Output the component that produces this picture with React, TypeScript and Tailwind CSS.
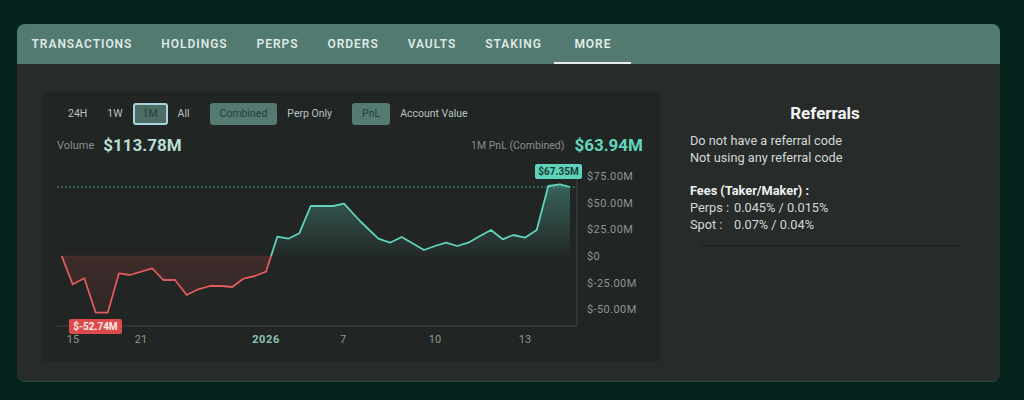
import React from 'react';

const tabs = ['TRANSACTIONS', 'HOLDINGS', 'PERPS', 'ORDERS', 'VAULTS', 'STAKING'];

const pts: [number, number][] = [
  [61.7, 255], [72.7, 283.3], [84.3, 277.3], [95.7, 311.7], [107.7, 311.7], [119, 272.3],
  [130, 274], [152.3, 267.3], [163.3, 279], [175, 279], [186.7, 294], [198.3, 288.3],
  [210, 285], [221.7, 285], [232.3, 286], [243.3, 277.7], [255, 275], [266, 270.7],
  [277.3, 235.7], [288.3, 237.7], [299.3, 232.3], [310.7, 205], [333.3, 205], [344, 202.7],
  [360, 220], [378.3, 237.7], [390, 241.7], [401.7, 236], [424, 249], [435, 245],
  [446, 241.7], [457.3, 245], [468.3, 241.7], [480, 235], [491, 229], [502.7, 238.3],
  [513.3, 234], [525, 236.7], [536.7, 229], [548.3, 185], [560, 183.3], [570, 186],
];

const line = pts.map((p) => p.join(',')).join(' ');
const area = `${line} 570,255 61.7,255`;

const yLabels = [
  { v: '$75.00M', y: 175 },
  { v: '$50.00M', y: 202 },
  { v: '$25.00M', y: 228 },
  { v: '$0', y: 255 },
  { v: '$-25.00M', y: 282 },
  { v: '$-50.00M', y: 308 },
];

const xLabels = [
  { v: '15', x: 73 },
  { v: '21', x: 141 },
  { v: '2026', x: 266, bold: true },
  { v: '7', x: 343 },
  { v: '10', x: 435 },
  { v: '13', x: 525 },
];

function Chart() {
  return (
    <svg width="618" height="190" viewBox="42 158 618 190" className="block">
      <defs>
        <clipPath id="above">
          <rect x="42" y="158" width="618" height="97" />
        </clipPath>
        <clipPath id="below">
          <rect x="42" y="255" width="618" height="100" />
        </clipPath>
        <linearGradient id="gUp" x1="0" y1="183" x2="0" y2="255" gradientUnits="userSpaceOnUse">
          <stop offset="0" stopColor="#5fd3bb" stopOpacity="0.36" />
          <stop offset="1" stopColor="#5fd3bb" stopOpacity="0.02" />
        </linearGradient>
        <linearGradient id="gDown" x1="0" y1="255" x2="0" y2="312" gradientUnits="userSpaceOnUse">
          <stop offset="0" stopColor="#e04a4c" stopOpacity="0.16" />
          <stop offset="1" stopColor="#e04a4c" stopOpacity="0.08" />
        </linearGradient>
      </defs>

      {/* fills */}
      <polygon points={area} fill="url(#gUp)" clipPath="url(#above)" />
      <polygon points={area} fill="url(#gDown)" clipPath="url(#below)" />
      <line x1="61.7" y1="255" x2="268" y2="255" stroke="#e04a4c" strokeOpacity="0.18" strokeWidth="1" />

      {/* axes */}
      <line x1="57" y1="325" x2="577" y2="325" stroke="#363b3a" strokeWidth="1.5" />
      <line x1="577" y1="168" x2="577" y2="325" stroke="#363b3a" strokeWidth="1.5" />
      <line x1="57" y1="186" x2="577" y2="186" stroke="#4fbfa6" strokeWidth="1" strokeDasharray="1.5 2.5" />

      {/* line */}
      <polyline points={line} fill="none" stroke="#5fd3bb" strokeWidth="1.8" strokeLinejoin="round" clipPath="url(#above)" />
      <polyline points={line} fill="none" stroke="#e05a5e" strokeWidth="1.8" strokeLinejoin="round" clipPath="url(#below)" />

      {/* y labels */}
      {yLabels.map((l) => (
        <text key={l.v} x="587" y={l.y + 4} fontSize="11" fill="#8c9592" fontFamily="Roboto, sans-serif" letterSpacing="0.4">
          {l.v}
        </text>
      ))}

      {/* x labels */}
      {xLabels.map((l) => (
        <text
          key={l.v}
          x={l.x}
          y={342}
          textAnchor="middle"
          fontSize="11"
          fontWeight={l.bold ? 700 : 400}
          fill={l.bold ? '#8fc4b4' : '#8c9592'}
          fontFamily="Roboto, sans-serif"
          letterSpacing={l.bold ? '0.6' : '0'}
        >
          {l.v}
        </text>
      ))}

      {/* min / max tags */}
      <rect x="69" y="318" width="53" height="15" rx="2" fill="#dd4a4c" />
      <text x="95.5" y="329" textAnchor="middle" fontSize="10" fontWeight="700" fill="#fbeaea" fontFamily="Roboto, sans-serif">
        $-52.74M
      </text>
      <rect x="535" y="163" width="47" height="15" rx="2" fill="#5fd3bb" />
      <text x="558.5" y="174" textAnchor="middle" fontSize="10" fontWeight="700" fill="#1b3d36" fontFamily="Roboto, sans-serif">
        $67.35M
      </text>
    </svg>
  );
}

function Btn({ label, active, focus }: { label: string; active?: boolean; focus?: boolean }) {
  return (
    <div
      className={`h-[22px] flex items-center rounded-[3px] text-[10.5px] ${
        focus
          ? 'bg-[#4c6c65] border-2 border-[#a8d3df] text-[#23403a] px-[8px]'
          : active
          ? 'bg-[#557a71] text-[#24423b] px-[10px]'
          : 'text-[#b9c4c1] px-[10px]'
      }`}
    >
      {label}
    </div>
  );
}

export default function App() {
  return (
    <div className="w-[1024px] h-[400px] bg-[#03231c] pt-6 pl-[17px] font-['Roboto',sans-serif]">
      <div className="w-[983px] h-[358px] rounded-lg overflow-hidden bg-[#272b2a] flex flex-col border-b border-[#2d463f]">
        {/* Tabs */}
        <div className="h-10 shrink-0 bg-[#537a70] flex">
          {tabs.map((t) => (
            <div key={t} className="h-full px-[14.5px] flex items-center text-[12px] font-semibold tracking-[0.08em] text-[#dde8e5]">
              {t}
            </div>
          ))}
          <div className="h-full px-[20px] -ml-[2px] flex items-center text-[12px] font-semibold tracking-[0.08em] text-[#e4eeeb] border-b-2 border-[#e6ecea] pt-[2px]">
            MORE
          </div>
        </div>

        <div className="flex pt-7 pl-[25px]">
          {/* Chart panel */}
          <div className="w-[618px] h-[270px] bg-[#212524] rounded-sm pt-[11px]">
            <div className="flex items-center px-4 gap-[10px]">
              <div className="flex">
                <Btn label="24H" />
                <Btn label="1W" />
                <Btn label="1M" focus />
                <Btn label="All" />
              </div>
              <div className="flex">
                <Btn label="Combined" active />
                <Btn label="Perp Only" />
              </div>
              <div className="flex">
                <Btn label="PnL" active />
                <Btn label="Account Value" />
              </div>
            </div>

            <div className="flex items-center justify-between pl-[15px] pr-[17px] mt-[8px]">
              <div className="flex items-center gap-[9px]">
                <span className="text-[11px] text-[#87908d]">Volume</span>
                <span className="text-[17px] font-bold text-[#b8ddd1]">$113.78M</span>
              </div>
              <div className="flex items-center gap-[10px]">
                <span className="text-[10.5px] text-[#87908d]">1M PnL (Combined)</span>
                <span className="text-[17px] font-bold text-[#62d6bc]">$63.94M</span>
              </div>
            </div>

            <Chart />
          </div>

          {/* Referrals */}
          <div className="flex-1 pl-[30px] pr-[40px] pt-[9px]">
            <div className="text-center text-[17px] font-bold text-[#f1f3f2] leading-6">Referrals</div>
            <div className="mt-[7px] text-[12.75px] leading-[17px] text-[#d3d9d7]">
              <div>Do not have a referral code</div>
              <div>Not using any referral code</div>
              <div className="mt-4 font-bold text-[#eef1f0]">Fees (Taker/Maker) :</div>
              <div className="flex">
                <span className="w-[44px]">Perps :</span>
                <span>0.045% / 0.015%</span>
              </div>
              <div className="flex">
                <span className="w-[44px]">Spot :</span>
                <span>0.07% / 0.04%</span>
              </div>
            </div>
            <div className="mt-[12px] ml-[10px] h-[2px] bg-[#202423]" />
          </div>
        </div>
      </div>
    </div>
  );
}
